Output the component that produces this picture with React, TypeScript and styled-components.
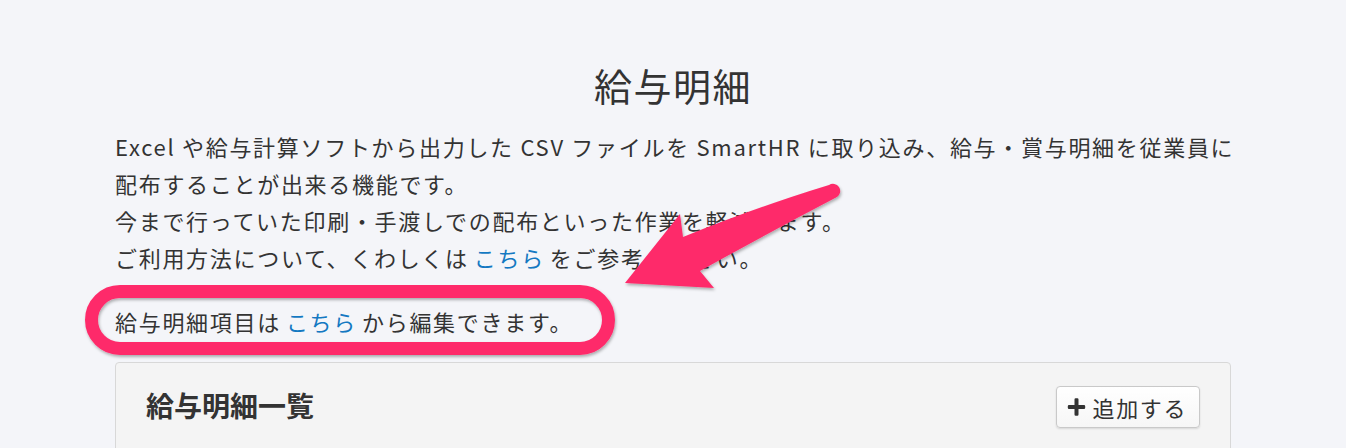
import React from "react";
import styled, { createGlobalStyle } from "styled-components";

const GlobalStyle = createGlobalStyle`
  html, body {
    margin: 0;
    padding: 0;
    background: #f4f5f9;
  }
  body {
    font-family: "Noto Sans CJK JP", "Noto Sans", sans-serif;
    color: #333333;
  }
`;

const Page = styled.div`
  position: relative;
  width: 1346px;
  height: 448px;
  overflow: hidden;
  background: #f4f5f9;
`;

const Container = styled.div`
  width: 1116px;
  margin: 0 auto;
  padding-top: 60px;
`;

const Title = styled.h1`
  margin: 0;
  font-size: 38px;
  font-weight: 400;
  line-height: 50px;
  text-align: center;
  color: #333333;
  letter-spacing: 1.5px;
`;

const Paragraph = styled.p<{ $top: number }>`
  margin: ${(p) => p.$top}px 0 0;
  font-size: 22px;
  line-height: 37px;
  letter-spacing: 1.7px;
  white-space: nowrap;
  color: #333333;
`;

const Link = styled.a`
  color: #1479c2;
  text-decoration: none;
  margin: 0 5px;
`;

const Card = styled.section`
  margin-top: 22px;
  min-height: 140px;
  border: 1px solid #d8d8d8;
  border-radius: 4px;
  background: #f4f4f4;
`;

const CardHeader = styled.div`
  display: flex;
  align-items: center;
  justify-content: space-between;
  padding: 23px 30px 0 30px;
`;

const CardTitle = styled.h2`
  margin: -5px 0 0;
  font-size: 28px;
  font-weight: 700;
  line-height: 40px;
  color: #333333;
`;

const AddButton = styled.button`
  display: inline-flex;
  align-items: center;
  gap: 7px;
  height: 42px;
  padding: 0 12px 0 10px;
  font-family: inherit;
  font-size: 22px;
  color: #333333;
  background: linear-gradient(#ffffff, #f6f6f6);
  border: 1px solid #c9c9c9;
  border-radius: 4px;
  box-shadow: 0 1px 2px rgba(0, 0, 0, 0.12);
  letter-spacing: 1.6px;
  cursor: pointer;
`;

const PlusIcon = styled.svg`
  flex: none;
  display: block;
`;

const Overlay = styled.svg`
  position: absolute;
  left: 0;
  top: 0;
  pointer-events: none;
`;

export default function App() {
  return (
    <>
      <GlobalStyle />
      <Page>
        <Container>
          <Title>給与明細</Title>
          <Paragraph $top={18}>
            Excel や給与計算ソフトから出力した CSV ファイルを SmartHR に取り込み、給与・賞与明細を従業員に
            <br />
            配布することが出来る機能です。
            <br />
            今まで行っていた印刷・手渡しでの配布といった作業を軽減します。
            <br />
            ご利用方法について、くわしくは<Link href="#">こちら</Link>をご参考ください。
          </Paragraph>
          <Paragraph $top={27}>
            給与明細項目は<Link href="#">こちら</Link>から編集できます。
          </Paragraph>
          <Card>
            <CardHeader>
              <CardTitle>給与明細一覧</CardTitle>
              <AddButton>
                <PlusIcon width="19" height="19" viewBox="0 0 19 19">
                  <path
                    d="M7.5 1.5 a1.2 1.2 0 0 1 1.2 -1.2 h1.6 a1.2 1.2 0 0 1 1.2 1.2 V7 h5.5 a1.2 1.2 0 0 1 1.2 1.2 v1.6 a1.2 1.2 0 0 1 -1.2 1.2 H11.5 v5.5 a1.2 1.2 0 0 1 -1.2 1.2 h-1.6 a1.2 1.2 0 0 1 -1.2 -1.2 V11 H2 a1.2 1.2 0 0 1 -1.2 -1.2 v-1.6 A1.2 1.2 0 0 1 2 7 h5.5 Z"
                    fill="#333333"
                  />
                </PlusIcon>
                追加する
              </AddButton>
            </CardHeader>
          </Card>
        </Container>
        <Overlay width="1346" height="448" viewBox="0 0 1346 448">
          <defs>
            <filter id="shadow" x="-10%" y="-10%" width="130%" height="130%">
              <feDropShadow dx="1" dy="2" stdDeviation="1.5" floodColor="#000" floodOpacity="0.3" />
            </filter>
          </defs>
          <rect
            x="91.5"
            y="291.5"
            width="517"
            height="57"
            rx="28.5"
            fill="none"
            stroke="#fe2c6b"
            strokeWidth="13"
            filter="url(#shadow)"
          />
          <path
            d="M 829 185 Q 760 206 683 237 L 680 214 L 625 283 L 714 288 L 700 271 Q 770 232 837 197 A 6.2 6.2 0 0 0 829 185 Z"
            fill="#fe2c6b"
            filter="url(#shadow)"
          />
        </Overlay>
      </Page>
    </>
  );
}
